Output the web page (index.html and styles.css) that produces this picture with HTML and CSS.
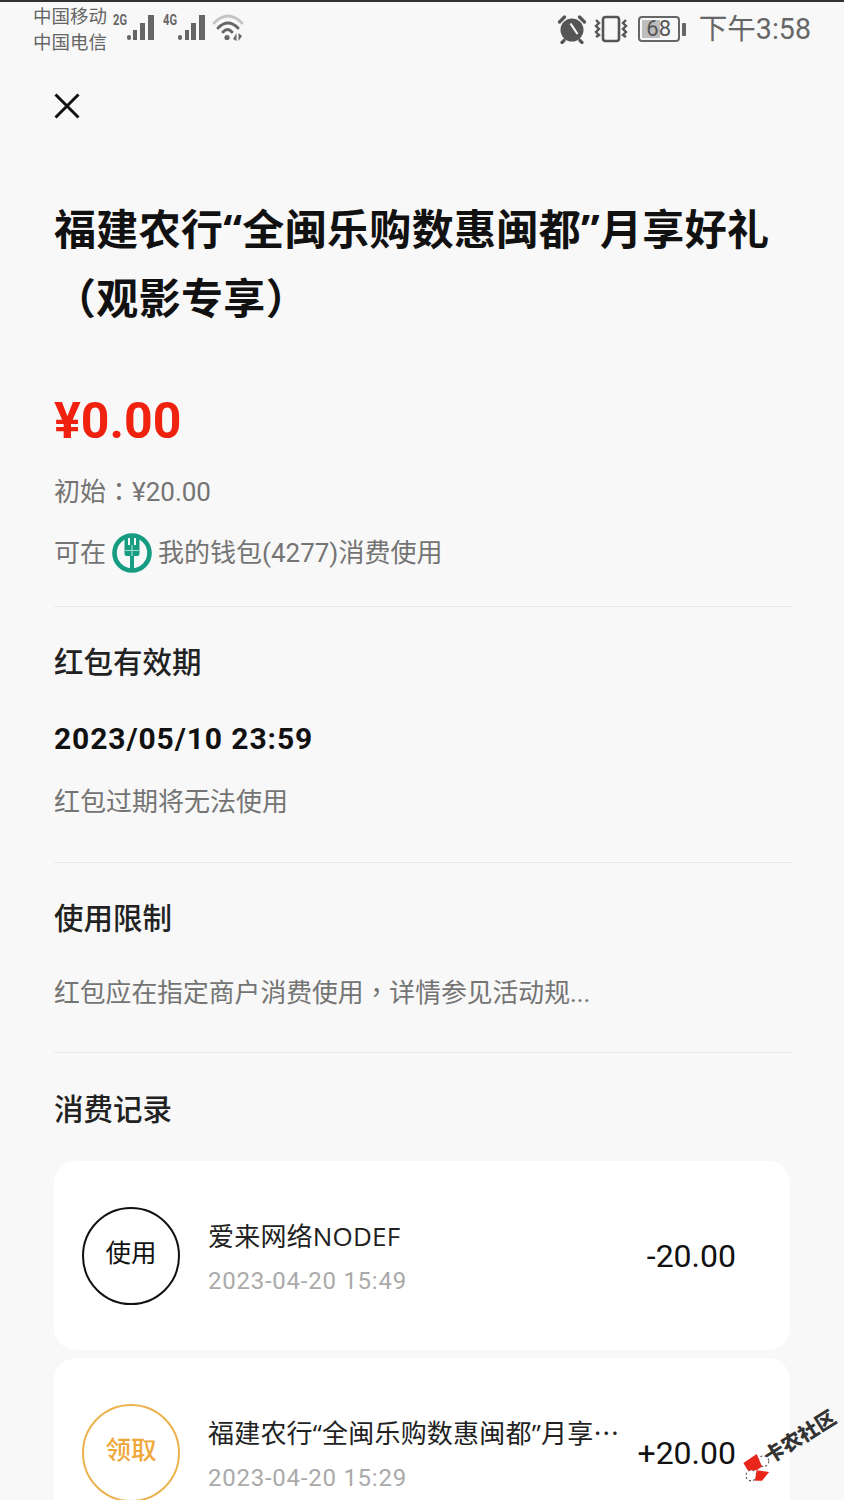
FILE: index.html
```html
<!DOCTYPE html>
<html lang="zh-CN">
<head>
<meta charset="utf-8">
<title>红包详情</title>
<link rel="stylesheet" href="styles.css">
</head>
<body>
<div class="page">
  <header class="status">
    <div class="status-left">
      <div class="carriers"><div>中国移动</div><div>中国电信</div></div>
      <svg class="signals" width="134" height="34" viewBox="0 0 134 34" aria-hidden="true">
        <text class="net" x="0" y="13" textLength="14" lengthAdjust="spacingAndGlyphs">2G</text>
        <g fill="#666">
          <rect x="14" y="23" width="4" height="5" rx="2"/><rect x="20" y="18" width="4" height="10"/><rect x="27" y="11" width="5" height="17"/><rect x="35" y="3" width="6" height="25"/>
        </g>
        <text class="net" x="50" y="13" textLength="14" lengthAdjust="spacingAndGlyphs">4G</text>
        <g fill="#666">
          <rect x="65" y="23" width="4" height="5" rx="2"/><rect x="72" y="18" width="4" height="10"/><rect x="78" y="11" width="5" height="17"/><rect x="86" y="3" width="6" height="25"/>
        </g>
        <g fill="none" stroke-linecap="round" stroke-width="3">
          <path d="M101 11 Q115 -3 129 11" stroke="#c4c4c4"/>
          <path d="M105 16 Q115 6 125 16" stroke="#666"/>
          <path d="M110 20 Q114.500 15 119 20" stroke="#666"/>
        </g>
        <circle cx="114" cy="25.500" r="2.600" fill="#666"/>
        <path d="M123.500 29V21l-3.500 6zM125.500 21v8l3.500-5z" fill="#666"/>
      </svg>
    </div>
    <div class="status-right">
      <svg width="30" height="30" viewBox="0 0 30 30" aria-hidden="true">
        <circle cx="15" cy="16" r="11.500" fill="#555"/>
        <path d="M13.500 9.500L20.500 20" stroke="#f8f8f8" stroke-width="2.200" fill="none"/>
        <path d="M2.500 8 L7.500 3 M27.500 8 L22.500 3 M7 26.500l-2 2M23 26.500l2 2" stroke="#555" stroke-width="3.200" stroke-linecap="round"/>
      </svg>
      <svg class="vibrate" width="34" height="28" viewBox="0 0 34 28" aria-hidden="true">
        <rect x="9" y="2" width="16" height="24" rx="2.500" fill="none" stroke="#555" stroke-width="2.600"/>
        <path d="M2 5l3 3-3 3 3 3-3 3 3 3-3 2M32 5l-3 3 3 3-3 3 3 3-3 3 3 2" fill="none" stroke="#555" stroke-width="2.400"/>
      </svg>
      <div class="battery">
        <div class="battery-body"><span class="battery-fill"></span><span class="battery-num">68</span></div>
        <span class="battery-cap"></span>
      </div>
      <span class="clock">下午3:58</span>
    </div>
  </header>

  <main class="content">
    <svg class="close" width="26" height="26" viewBox="0 0 26 26" aria-hidden="true">
      <path d="M1.500 1.500L24.500 24.500M24.500 1.500L1.500 24.500" stroke="#111" stroke-width="3" fill="none"/>
    </svg>

    <h1 class="title">福建农行“全闽乐购数惠闽都”月享好礼（观影专享）</h1>

    <div class="amount">¥0.00</div>
    <div class="line muted initial">初始：¥20.00</div>
    <div class="line muted via">可在
      <svg class="bank" width="40" height="40" viewBox="0 0 40 40" aria-hidden="true">
        <circle cx="20" cy="20" r="17.500" fill="none" stroke="#169c80" stroke-width="4.600"/>
        <path d="M12.500 3h3.500v9h2V3h4v9h2V3h3.500v18a2 2 0 0 1-2 2H22v14h-4V23h-3.500a2 2 0 0 1-2-2z" fill="#169c80"/>
        <path d="M20 12v11M13 17.500h14" stroke="#a5dccf" stroke-width="1.200"/>
      </svg>
      我的钱包(4277)消费使用</div>

    <hr class="rule rule-first">

    <h2 class="heading h-valid">红包有效期</h2>
    <div class="line expiry">2023/05/10 23:59</div>
    <div class="line muted note">红包过期将无法使用</div>

    <hr class="rule rule-second">

    <h2 class="heading h-limit">使用限制</h2>
    <div class="line muted limit">红包应在指定商户消费使用，详情参见活动规...</div>

    <hr class="rule rule-third">

    <h2 class="heading h-record">消费记录</h2>

    <section class="records">
      <article class="card">
        <div class="badge">使用</div>
        <div class="info">
          <div class="name">爱来网络NODEF</div>
          <div class="time">2023-04-20 15:49</div>
        </div>
        <div class="money">-20.00</div>
      </article>
      <article class="card">
        <div class="badge badge-gold">领取</div>
        <div class="info">
          <div class="name">福建农行“全闽乐购数惠闽都”月享⋯</div>
          <div class="time">2023-04-20 15:29</div>
        </div>
        <div class="money">+20.00</div>
      </article>
    </section>
  </main>

  <div class="watermark">
    <svg class="wm-bow" width="30" height="30" viewBox="0 0 28 28" aria-hidden="true">
      <circle cx="20" cy="7.700" r="5" fill="#fff" stroke="#555" stroke-width="1" stroke-dasharray="2 2"/>
      <circle cx="8.700" cy="21" r="5" fill="#fff" stroke="#555" stroke-width="1" stroke-dasharray="2 2"/>
      <path d="M1.300 9.300L13.700 1l5 11.700-5 3.300H5.300zM13.700 16l11.600 1.700L18.700 26H12z" fill="#e8261c"/>
    </svg>
    <span class="wm-text">卡农社区</span>
  </div>
</div>
</body>
</html>
```

FILE: styles.css
```css
* { box-sizing: border-box; }
html, body { margin: 0; padding: 0; }
body {
  background: #f8f8f8;
  font-family: Roboto, "Noto Sans CJK SC", sans-serif;
  color: #111;
}
.page {
  position: relative;
  width: 844px;
  height: 1500px;
  overflow: hidden;
  border-top: 2px solid #333;
}
.status {
  display: flex;
  justify-content: space-between;
  height: 58px;
  padding: 2px 33px 0 33px;
  color: #666;
}
.status-left { display: flex; gap: 6px; }
.carriers { font-size: 18.5px; line-height: 26px; width: 74px; white-space: nowrap; }
.signals { margin-top: 8px; }
.net { font: bold 14px Roboto, sans-serif; fill: #666; }
.status-right { display: flex; align-items: center; gap: 8px; height: 50px; }
.vibrate { margin-left: -1px; }
.battery { display: flex; align-items: center; gap: 2px; margin-left: 2px; }
.battery-body {
  position: relative;
  width: 42px;
  height: 26px;
  border: 2px solid #666;
  border-radius: 4px;
  padding: 2px;
}
.battery-fill { display: block; width: 55%; height: 100%; background: #bdbdbd; }
.battery-num {
  position: absolute;
  inset: 0;
  text-align: center;
  font-size: 22px;
  line-height: 22px;
  color: #555;
}
.battery-cap { width: 4px; height: 13px; background: #666; border-radius: 1px; }
.clock { font-size: 28.6px; line-height: 34px; margin-left: 5px; white-space: nowrap; }

.content { padding: 33px 52px 0 54px; }
.close { display: block; }
.title {
  margin: 75px 0 0;
  font-family: "Open Sans", "Noto Sans CJK SC", sans-serif;
  font-size: 42px;
  line-height: 69px;
  font-weight: 700;
  letter-spacing: 0.33px;
  color: #111;
}
.amount {
  margin-top: 59px;
  font-size: 50px;
  line-height: 60px;
  font-weight: 700;
  color: #f0220f;
}
.line { font-size: 26px; line-height: 40px; }
.muted { color: #747474; }
.initial {
  margin-top: 21px;
  font-family: Roboto, "Noto Sans CJK TC", sans-serif;
  font-feature-settings: "locl" 0;
}
.via { margin-top: 21px; display: flex; align-items: center; gap: 6px; white-space: nowrap; }
.bank { flex: none; }
.rule { margin: 0; border: 0; height: 1px; background: #e9e9e9; }
.rule-first { margin-top: 33px; }
.rule-second { margin-top: 40px; }
.rule-third { margin-top: 39px; }
.heading { margin: 0; font-size: 29.5px; line-height: 40px; font-weight: 500; color: #222; }
.h-valid { margin-top: 35px; padding-top: 1px; height: 41px; }
.h-limit { margin-top: 35px; padding-top: 1px; height: 41px; }
.h-record { margin-top: 37px; }
.expiry { margin-top: 36px; font-size: 30px; font-weight: 700; letter-spacing: 0.9px; color: #111; }
.note { margin-top: 23px; }
.limit {
  margin-top: 34px;
  font-size: 25.8px;
  white-space: nowrap;
  font-family: Roboto, "Noto Sans CJK TC", sans-serif;
  font-feature-settings: "locl" 0;
}

.records { margin-top: 31px; width: 736px; display: flex; flex-direction: column; gap: 8px; }
.card {
  display: flex;
  align-items: center;
  height: 189px;
  padding: 0 54px 0 28px;
  background: #fff;
  border-radius: 22px;
}
.badge {
  flex: none;
  width: 98px;
  height: 98px;
  padding-bottom: 10px;
  border: 2px solid #111;
  border-radius: 50%;
  display: flex;
  align-items: center;
  justify-content: center;
  font-size: 25.500px;
  color: #111;
}
.badge-gold { border-color: #ecb24e; color: #f0a73a; font-weight: 500; }
.info { flex: 1; min-width: 0; margin-left: 28px; padding-top: 6px; }
.name {
  margin-top: -1px;
  font-family: "Open Sans", "Noto Sans CJK SC", sans-serif;
  font-size: 26px;
  line-height: 38px;
  letter-spacing: 0.2px;
  color: #222;
  white-space: nowrap;
}
.time { margin-top: 7px; font-size: 24px; line-height: 38px; letter-spacing: 0.75px; color: #aaa; }
.money { flex: none; margin-left: 16px; padding-top: 1px; font-size: 32px; color: #111; }

.watermark {
  position: absolute;
  inset: 0;
  pointer-events: none;
}
.wm-bow { position: absolute; left: 742px; top: 1451px; }
.wm-text {
  position: absolute;
  left: 760px;
  top: 1421px;
  width: 80px;
  line-height: 28px;
  font-size: 20px;
  font-weight: 900;
  color: #333;
  white-space: nowrap;
  transform: rotate(-32deg);
}
```
